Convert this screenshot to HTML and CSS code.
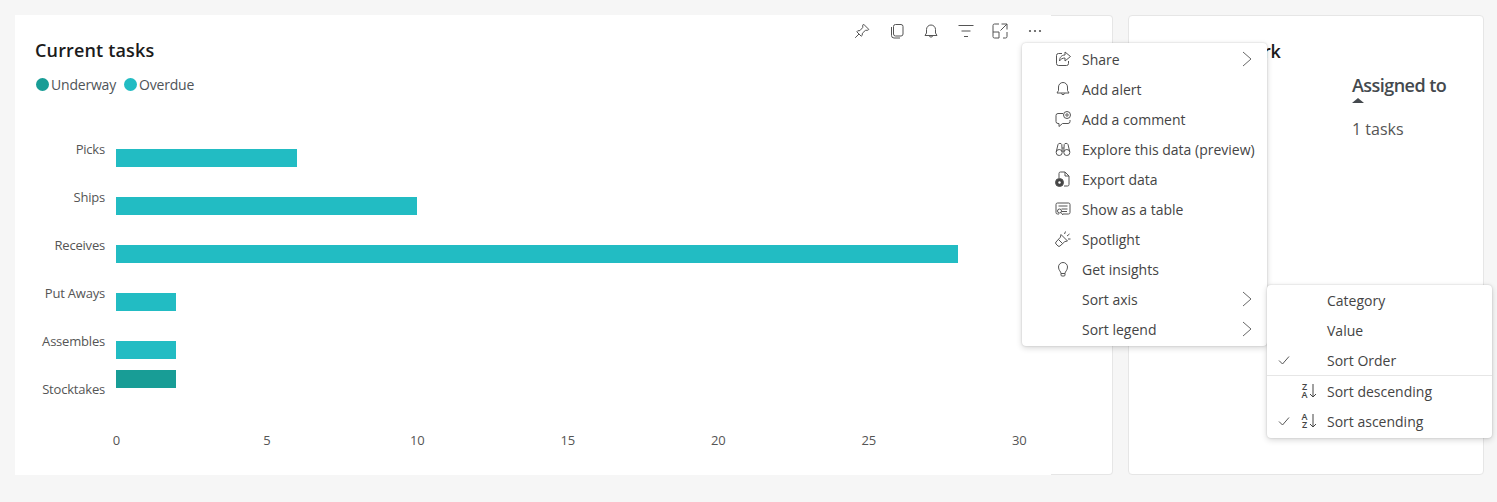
FILE: index.html
```html
<!DOCTYPE html>
<html lang="en">

<head>
    <meta charset="UTF-8">
    <title>Current tasks</title>
    <link rel="stylesheet" href="styles.css">
</head>

<body>
    <div class="page">
        <div class="card card-main">
            <div class="visual">
                <h2 class="title">Current tasks</h2>
                <div class="legend">
                    <span class="dot dot-underway"></span><span class="legend-name">Underway</span>
                    <span class="dot dot-overdue"></span><span class="legend-name">Overdue</span>
                </div>
                <div class="chart">
                    <div class="row">
                        <div class="cat">Picks</div>
                        <div class="slots"><div class="slot"></div><div class="slot"><div class="bar bar-overdue" style="width: 181px"></div></div></div>
                    </div>
                    <div class="row">
                        <div class="cat">Ships</div>
                        <div class="slots"><div class="slot"></div><div class="slot"><div class="bar bar-overdue" style="width: 301px"></div></div></div>
                    </div>
                    <div class="row">
                        <div class="cat">Receives</div>
                        <div class="slots"><div class="slot"></div><div class="slot"><div class="bar bar-overdue" style="width: 842px"></div></div></div>
                    </div>
                    <div class="row">
                        <div class="cat">Put Aways</div>
                        <div class="slots"><div class="slot"></div><div class="slot"><div class="bar bar-overdue" style="width: 60px"></div></div></div>
                    </div>
                    <div class="row">
                        <div class="cat">Assembles</div>
                        <div class="slots"><div class="slot"></div><div class="slot"><div class="bar bar-overdue" style="width: 60px"></div></div></div>
                    </div>
                    <div class="row">
                        <div class="cat">Stocktakes</div>
                        <div class="slots"><div class="slot"><div class="bar bar-underway" style="width: 60px"></div></div><div class="slot"></div></div>
                    </div>
                </div>
                <div class="axis">
                    <span>0</span><span>5</span><span>10</span><span>15</span><span>20</span><span>25</span><span>30</span>
                </div>
            </div>
            <div class="visual-rest"></div>

            <!-- hover toolbar -->
            <div class="toolbar">
                <svg class="ico" viewBox="0 0 16 16"><path d="M9.6 1.2 14.8 6.4 13.9 7.2 11.4 7.4 8.4 10.2 8.2 12.4 7.2 13.2 2.8 8.8 3.7 7.8 5.9 7.6 8.7 4.6 8.8 2Z"/><path d="M5 11 1.2 14.8"/></svg>
                <svg class="ico" viewBox="0 0 16 16"><rect x="4.5" y="1.5" width="9.5" height="11.5" rx="2"/><path d="M2.5 4v8.5a2.5 2.5 0 0 0 2.500 2.500h6"/></svg>
                <svg class="ico" viewBox="0 0 16 16"><path d="M2 12.500h12l-1.500-2.500V6.500a4.500 4.500 0 0 0-9 0V10Z"/><path d="M6.200 12.800a1.900 1.900 0 0 0 3.600 0"/></svg>
                <svg class="ico" viewBox="0 0 16 16"><path d="M.5 2.500h15M3.500 8h9M6 13.500h4"/></svg>
                <svg class="ico" viewBox="0 0 16 16"><path d="M7 1H2.500A1.500 1.500 0 0 0 1 2.500v11A1.500 1.500 0 0 0 2.500 15h4.500V9H1M9.500 1H15v5.500M15 1 8.500 7.500M11 15h2.500a1.500 1.500 0 0 0 1.500-1.500V9"/></svg>
                <svg class="ico ico-more" viewBox="0 0 16 16"><circle cx="3" cy="8" r="1.100"/><circle cx="8" cy="8" r="1.100"/><circle cx="13" cy="8" r="1.100"/></svg>
            </div>
        </div>

        <div class="card card-side">
            <div class="side-title">rk</div>
            <div class="side-col">
                <div class="side-head">Assigned to</div>
                <div class="caret"></div>
                <div class="side-value">1 tasks</div>
            </div>
        </div>
    </div>

    <div class="menu">
        <div class="item">
            <svg class="ico" viewBox="0 0 16 16"><path d="M7 2.500H3.500a2 2 0 0 0-2 2v8a2 2 0 0 0 2 2h8a2 2 0 0 0 2-2V10"/><path d="M10 1v3C6.500 4 4.500 6.500 4.500 10c1.200-2 3-3 5.500-3v3l5.500-4.500Z"/></svg>
            <span class="label">Share</span>
            <svg class="chev" viewBox="0 0 10 16"><path d="M1 1l8 7-8 7"/></svg>
        </div>
        <div class="item">
            <svg class="ico" viewBox="0 0 16 16"><path d="M2 12h12l-1.500-2.500V6a4.500 4.500 0 0 0-9 0v3.500Z"/><path d="M6.200 12.300a1.900 1.900 0 0 0 3.600 0"/></svg>
            <span class="label">Add alert</span>
        </div>
        <div class="item">
            <svg class="ico" viewBox="0 0 16 16"><path d="M8 2.500H3A2 2 0 0 0 1 4.500v6a2 2 0 0 0 2 2h1v3l3.500-3H13a2 2 0 0 0 2-2V9"/><circle cx="12" cy="4" r="3.500"/><circle cx="12" cy="4" r="1.200"/></svg>
            <span class="label">Add a comment</span>
        </div>
        <div class="item">
            <svg class="ico" viewBox="0 0 16 16"><circle cx="4.200" cy="11.500" r="3"/><circle cx="11.800" cy="11.500" r="3"/><path d="M1.200 11 3 3.500C3.300 2 6.500 2 6.800 3.500L7.200 11M14.800 11 13 3.500C12.700 2 9.500 2 9.200 3.500L8.800 11M7.200 7h1.600"/></svg>
            <span class="label">Explore this data (preview)</span>
        </div>
        <div class="item">
            <svg class="ico" viewBox="0 0 16 16"><path d="M4 7V2.500A1.500 1.500 0 0 1 5.500 1H10l4 4v8.500a1.500 1.500 0 0 1-1.500 1.500H9M10 1v4h4"/><circle class="solid" cx="4.500" cy="11.500" r="4"/><circle class="hole" cx="4.500" cy="11.500" r="1.200"/></svg>
            <span class="label">Export data</span>
        </div>
        <div class="item">
            <svg class="ico" viewBox="0 0 16 16"><path d="M4 13H2.500A1.500 1.500 0 0 1 1 11.500v-8A1.500 1.500 0 0 1 2.500 2h11A1.500 1.500 0 0 1 15 3.500v8a1.500 1.500 0 0 1-1.500 1.500H8M3.500 5h9M6.500 8h6M6.500 10.500H12"/><circle cx="4.500" cy="10" r="2"/><path d="M6 11.500 8 14"/></svg>
            <span class="label">Show as a table</span>
        </div>
        <div class="item">
            <svg class="ico" viewBox="0 0 16 16"><path d="M6 3.500 12.500 10 9.800 10.600 5 15a1.500 1.500 0 0 1-2 0L1 13a1.500 1.500 0 0 1 0-2L5.400 6.200Z"/><path d="M3.500 8.500 7.500 12.500M9.500 3l1-2.500M12 5l2.500-2M13 8h2.500"/></svg>
            <span class="label">Spotlight</span>
        </div>
        <div class="item">
            <svg class="ico" viewBox="0 0 16 16"><path d="M6 12.500C6 10.500 3.500 9.500 3.500 6a4.500 4.500 0 0 1 9 0c0 3.500-2.500 4.500-2.500 6.500Z"/><path d="M6 12.500V14a1 1 0 0 0 1 1h2a1 1 0 0 0 1-1v-1.500"/></svg>
            <span class="label">Get insights</span>
        </div>
        <div class="item">
            <span class="ico"></span>
            <span class="label">Sort axis</span>
            <svg class="chev" viewBox="0 0 10 16"><path d="M1 1l8 7-8 7"/></svg>
        </div>
        <div class="item">
            <span class="ico"></span>
            <span class="label">Sort legend</span>
            <svg class="chev" viewBox="0 0 10 16"><path d="M1 1l8 7-8 7"/></svg>
        </div>
    </div>

    <div class="menu submenu">
        <div class="item">
            <span class="check"></span><span class="ico"></span>
            <span class="label">Category</span>
        </div>
        <div class="item">
            <span class="check"></span><span class="ico"></span>
            <span class="label">Value</span>
        </div>
        <div class="item">
            <svg class="check" viewBox="0 0 12 12"><path d="M1 6.500 4.500 10 11 2.500"/></svg><span class="ico"></span>
            <span class="label">Sort Order</span>
        </div>
        <div class="divider"></div>
        <div class="item">
            <span class="check"></span>
            <span class="ico sort-ico"><span class="letters">ZA</span><svg class="arrow" viewBox="0 0 8 16"><path d="M4 1v13M1 11l3 3 3-3"/></svg></span>
            <span class="label">Sort descending</span>
        </div>
        <div class="item">
            <svg class="check" viewBox="0 0 12 12"><path d="M1 6.500 4.500 10 11 2.500"/></svg>
            <span class="ico sort-ico"><span class="letters">AZ</span><svg class="arrow" viewBox="0 0 8 16"><path d="M4 1v13M1 11l3 3 3-3"/></svg></span>
            <span class="label">Sort ascending</span>
        </div>
    </div>
</body>

</html>
```

FILE: styles.css
```css
body {
    margin: 0;
    background-color: #f6f6f6;
    font-family: "Open Sans", "Noto Sans", sans-serif;
    color: #444;
    height: 502px;
    overflow: hidden;
    position: relative;
}

.page {
    display: flex;
    gap: 15px;
    padding: 15px 13px 0 15px;
}

.card {
    height: 460px;
    box-sizing: border-box;
    flex: none;
}

/* main card: focused part has no border, the rest keeps it */
.card-main {
    width: 1098px;
    display: flex;
    position: relative;
}

.visual {
    width: 1036px;
    background: #fff;
    padding: 24px 0 0 20px;
    box-sizing: border-box;
}

.visual-rest {
    flex: 1;
    background: #fff;
    border: 1px solid #e6e6e6;
    border-left: none;
    border-radius: 0 4px 4px 0;
}

.title {
    margin: 0;
    font-size: 18px;
    line-height: 22px;
    font-weight: 600;
    letter-spacing: 0.15px;
    color: #1b1b1b;
}

.legend {
    display: flex;
    align-items: center;
    margin-top: 13px;
    height: 20px;
    font-size: 14px;
    letter-spacing: -0.2px;
    color: #4f5458;
}

.dot {
    width: 13px;
    height: 13px;
    border-radius: 50%;
    margin-right: 2px;
    margin-left: 1px;
}

.legend-name {
    margin-right: 7px;
}

.dot-underway,
.bar-underway {
    background-color: #189d96;
}

.dot-overdue,
.bar-overdue {
    background-color: #22bcc3;
}

.chart {
    margin-top: 31px;
}

.row {
    display: flex;
    align-items: center;
    height: 48px;
}

.cat {
    width: 70px;
    padding-right: 11px;
    text-align: right;
    font-size: 13px;
    letter-spacing: -0.2px;
    color: #555;
    white-space: nowrap;
}

.slots {
    display: flex;
    flex-direction: column;
    gap: 1px;
    margin-top: -1px;
}

.slot {
    height: 18px;
}

.bar {
    height: 18px;
}

.axis {
    display: flex;
    margin: 18px 0 0 6px;
    font-size: 13px;
    letter-spacing: -0.2px;
    color: #555;
}

.axis span {
    flex: none;
    width: 150.500px;
    text-align: center;
}

.toolbar {
    position: absolute;
    top: 8px;
    left: 839px;
    display: flex;
    gap: 18.500px;
}

.ico {
    width: 16px;
    height: 16px;
    flex: none;
    fill: none;
    stroke: #555;
    stroke-width: 1;
}

.ico-more circle {
    fill: #555;
    stroke: none;
}

.ico .solid {
    fill: #444;
}

.ico .hole {
    fill: #fff;
    stroke: none;
}

.card-side {
    width: 356px;
    background: #fff;
    border: 1px solid #e6e6e6;
    border-radius: 4px;
    padding: 24px 0 0 134px;
}

.side-title {
    font-size: 18px;
    line-height: 22px;
    font-weight: 600;
    letter-spacing: -0.35px;
    color: #1b1b1b;
}

.side-col {
    margin: 11px 0 0 89px;
}

.side-head {
    font-size: 18px;
    line-height: 24px;
    font-weight: 600;
    letter-spacing: -0.55px;
    color: #44494e;
}

.caret {
    width: 0;
    height: 0;
    margin-top: 1px;
    border-left: 6px solid transparent;
    border-right: 6px solid transparent;
    border-bottom: 5px solid #44494e;
}

.side-value {
    margin-top: 15px;
    font-size: 16px;
    line-height: 22px;
    letter-spacing: 0;
    color: #555;
}

.menu {
    position: absolute;
    top: 43px;
    left: 1022px;
    width: 245px;
    padding: 1px 0 2px;
    box-sizing: border-box;
    background: #fff;
    border-radius: 4px;
    box-shadow: 0 0 2px rgba(0, 0, 0, 0.18), 0 2px 6px rgba(0, 0, 0, 0.16);
    font-size: 14px;
    color: #444;
}

.item {
    display: flex;
    align-items: center;
    height: 30px;
    padding-left: 33px;
}

.item .ico {
    margin-right: 11px;
}

.label {
    flex: 1;
    white-space: nowrap;
}

.chev {
    width: 10px;
    height: 16px;
    margin-right: 15px;
    fill: none;
    stroke: #666;
    stroke-width: 1;
}

.submenu {
    top: 285px;
    left: 1267px;
    width: 225px;
    padding: 0 0 2px;
}

.submenu .item {
    padding-left: 11px;
}

.submenu .item .ico {
    margin-right: 10px;
}

.check {
    width: 12px;
    height: 12px;
    margin-right: 11px;
    fill: none;
    stroke: #555;
    stroke-width: 1;
    flex: none;
}

.divider {
    height: 1px;
    background: #e6e6e6;
}

.sort-ico {
    display: flex;
    align-items: center;
    stroke: none;
}

/* one word, wrapped letter by letter */
.letters {
    width: 7px;
    word-break: break-all;
    text-align: center;
    font-size: 9px;
    line-height: 8px;
    font-weight: 600;
    color: #444;
}

.arrow {
    width: 8px;
    height: 16px;
    margin-left: 1px;
    fill: none;
    stroke: #444;
    stroke-width: 1;
}
```
